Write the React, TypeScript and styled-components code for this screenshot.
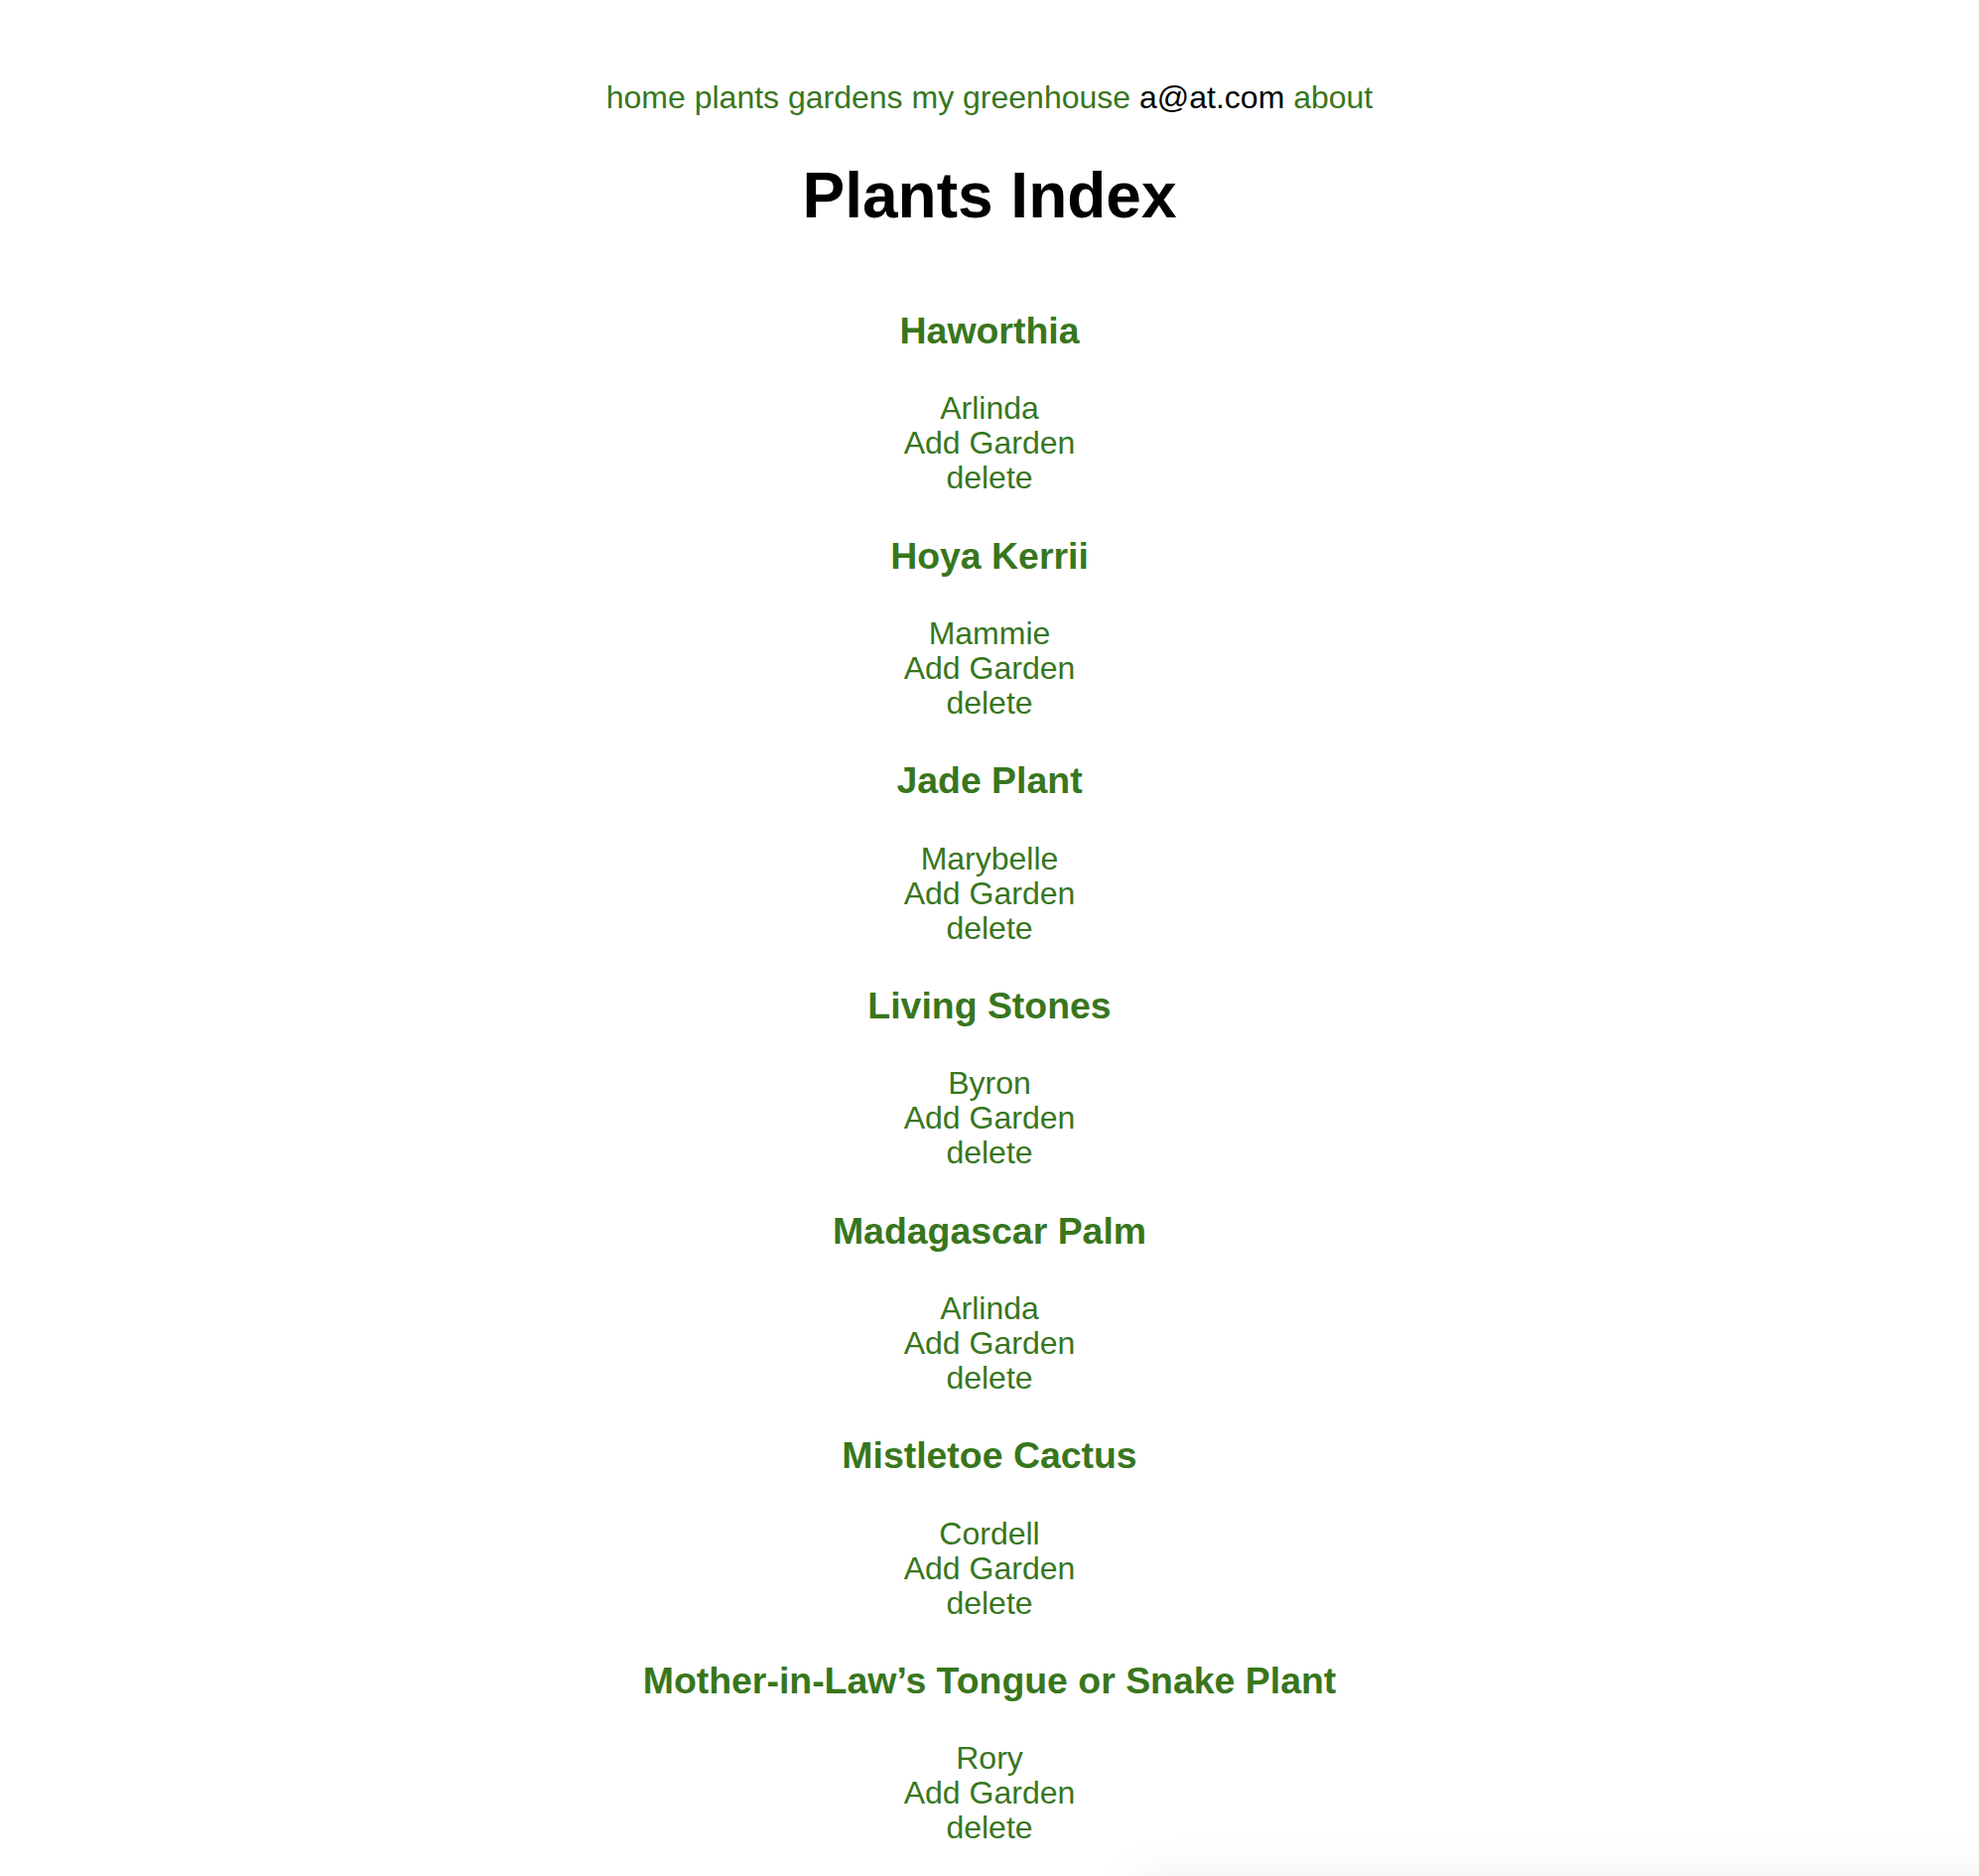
import React from "react";
import styled, { createGlobalStyle } from "styled-components";

const GlobalStyle = createGlobalStyle`
  html, body {
    margin: 0;
    padding: 0;
    background: #ffffff;
    scrollbar-width: none;
  }
  body::-webkit-scrollbar { display: none; }
  body {
    font-family: "Liberation Sans", Arial, Helvetica, sans-serif;
    font-size: 32px;
    color: #000000;
  }
`;

const Page = styled.div`
  display: flex;
  flex-direction: column;
  align-items: center;
  padding-top: 81px;
  text-align: center;
`;

const Nav = styled.nav`
  display: flex;
  gap: 8.9px;
  font-size: 32px;
  line-height: 35px;
`;

const NavLink = styled.a<{ $plain?: boolean }>`
  color: ${(p) => (p.$plain ? "#000000" : "#38761d")};
  text-decoration: none;
  cursor: pointer;
`;

const Title = styled.h1`
  margin: 45px 0 38px;
  font-size: 64px;
  line-height: 73.5px;
  font-weight: 700;
  color: #000000;
`;

const PlantList = styled.div`
  display: flex;
  flex-direction: column;
  align-items: center;
`;

const PlantCard = styled.section`
  display: flex;
  flex-direction: column;
  align-items: center;
`;

const PlantName = styled.h3`
  margin: 37.44px 0;
  font-size: 37.44px;
  line-height: 46.8px;
  font-weight: 700;
  color: #38761d;
`;

const ItemLink = styled.a`
  display: block;
  font-size: 32px;
  line-height: 35px;
  color: #38761d;
  text-decoration: none;
  cursor: pointer;
`;

const ShadowPanel = styled.div`
  position: fixed;
  left: 1150px;
  right: -40px;
  top: 1905px;
  height: 200px;
  border-radius: 16px;
  background: #ffffff;
  box-shadow: 0 0 60px rgba(0, 0, 0, 0.13);
`;

const plants = [
  { name: "Haworthia", owner: "Arlinda" },
  { name: "Hoya Kerrii", owner: "Mammie" },
  { name: "Jade Plant", owner: "Marybelle" },
  { name: "Living Stones", owner: "Byron" },
  { name: "Madagascar Palm", owner: "Arlinda" },
  { name: "Mistletoe Cactus", owner: "Cordell" },
  { name: "Mother-in-Law\u2019s Tongue or Snake Plant", owner: "Rory" },
];

export default function App() {
  return (
    <>
      <GlobalStyle />
      <Page>
        <Nav>
          <NavLink>home</NavLink>
          <NavLink>plants</NavLink>
          <NavLink>gardens</NavLink>
          <NavLink>my greenhouse</NavLink>
          <NavLink $plain>a@at.com</NavLink>
          <NavLink>about</NavLink>
        </Nav>
        <Title>Plants Index</Title>
        <PlantList>
          {plants.map((p) => (
            <PlantCard key={p.name}>
              <PlantName>{p.name}</PlantName>
              <ItemLink>{p.owner}</ItemLink>
              <ItemLink>Add Garden</ItemLink>
              <ItemLink>delete</ItemLink>
            </PlantCard>
          ))}
        </PlantList>
      </Page>
      <ShadowPanel />
    </>
  );
}
